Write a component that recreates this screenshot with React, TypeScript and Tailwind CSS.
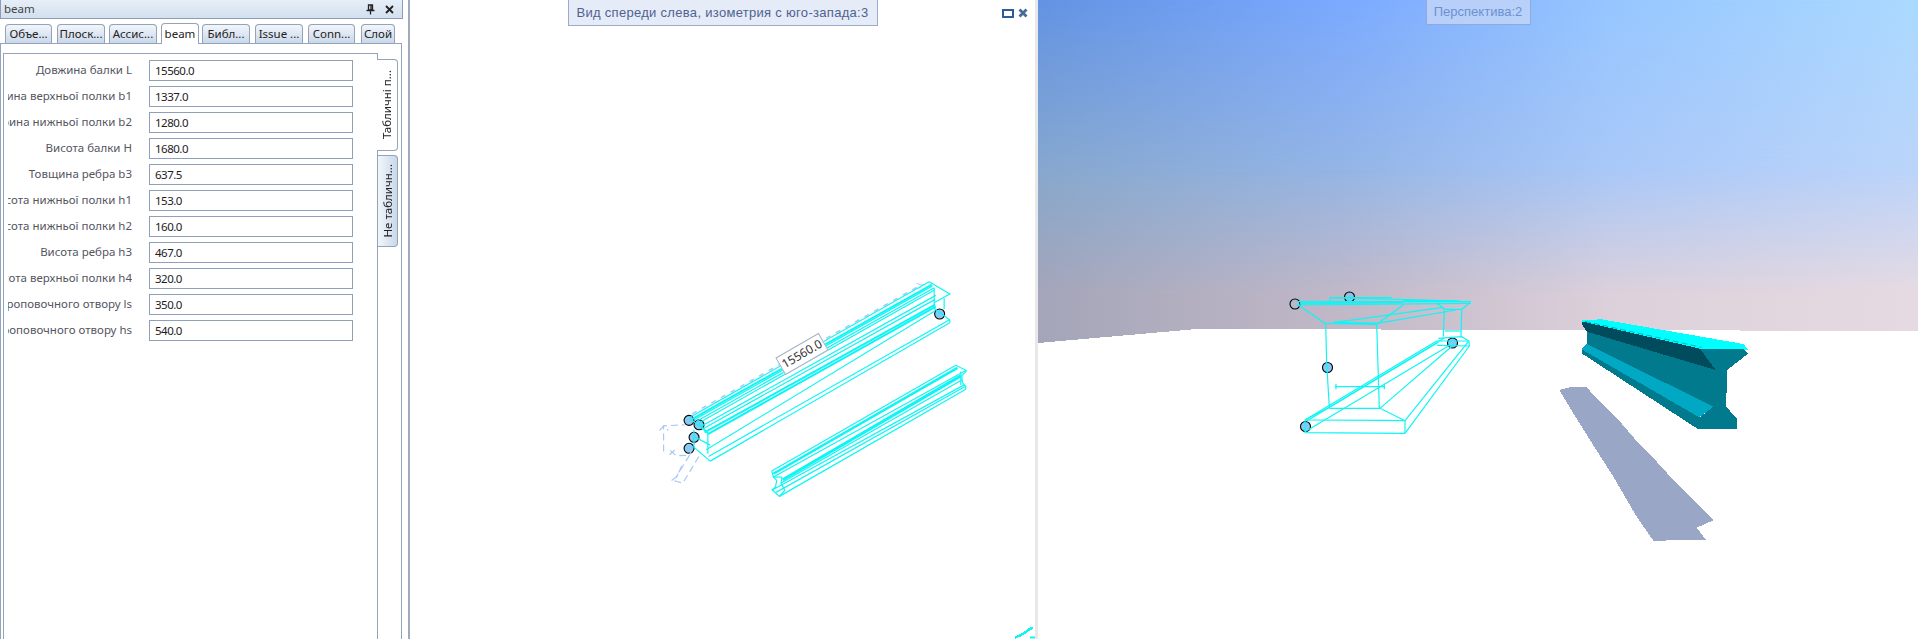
import React from "react";

const uiFont = "font-['Noto_Sans','Liberation_Sans',sans-serif]";

const tabs = [
  { t: "Объе...", c: "ml-[5px] w-[47px]" },
  { t: "Плоск...", c: "ml-[5px] w-[48px]" },
  { t: "Ассис...", c: "ml-[4px] w-[48px]" },
  { t: "beam", c: "ml-[4px] w-[38px]", active: true },
  { t: "Библ...", c: "ml-[3px] w-[48px]" },
  { t: "Issue ...", c: "ml-[5px] w-[48px]" },
  { t: "Conn...", c: "ml-[5px] w-[47px]" },
  { t: "Слой", c: "ml-[6px] w-[34px]" },
];

const rows = [
  ["Довжина балки L", "15560.0"],
  ["Ширина верхньої полки b1", "1337.0"],
  ["Ширина нижньої полки b2", "1280.0"],
  ["Висота балки H", "1680.0"],
  ["Товщина ребра b3", "637.5"],
  ["Висота нижньої полки h1", "153.0"],
  ["Висота нижньої полки h2", "160.0"],
  ["Висота ребра h3", "467.0"],
  ["Висота верхньої полки h4", "320.0"],
  ["Довжина строповочного отвору ls", "350.0"],
  ["Висота строповочного отвору hs", "540.0"],
];

const CY = "#0ff5f5";

function pts(o: [number, number], a: number[]) {
  const out: string[] = [];
  for (let i = 0; i < a.length; i += 2) out.push(`${o[0] + a[i] / 3},${o[1] + a[i + 1] / 3}`);
  return out.join(" ");
}

function Wire({ o, lines, w = 1.2, color = CY, dash }: { o: [number, number]; lines: number[][]; w?: number; color?: string; dash?: string }) {
  return (
    <g fill="none" stroke={color} strokeWidth={w} strokeDasharray={dash}>
      {lines.map((l, i) => (
        <polyline key={i} points={pts(o, l)} />
      ))}
    </g>
  );
}

function Handle({ x, y, fill = "#86caf4" }: { x: number; y: number; fill?: string }) {
  return <circle cx={x} cy={y} r={5} fill={fill} stroke="#000" strokeWidth={1.1} />;
}

function Poly({ o, p, fill }: { o: [number, number]; p: number[]; fill: string }) {
  return <polygon points={pts(o, p)} fill={fill} shapeRendering="crispEdges" />;
}

function MiddleScene() {
  const o: [number, number] = [640, 270];
  return (
    <svg className="absolute inset-0 h-full w-full" viewBox="410 0 626 639">
      <Handle x={689.5} y={420.5} />
      <Handle x={699.5} y={425} />
      <Handle x={694.5} y={437.5} />
      <Handle x={689.5} y={448.5} />
      <Handle x={940.5} y={314} />
      <Wire o={o} color="#a9c9f4" w={1.5} dash="5 6" lines={[[158, 432, 850, 42]]} />
      <polyline points={pts(o, [832, 40, 850, 46, 838, 56])} fill="none" stroke="#a9c9f4" />
      <Wire
        o={o}
        color="#a9c9f4"
        dash="7 4"
        lines={[
          [72, 545, 72, 468, 135, 465],
          [60, 482, 72, 468, 86, 482],
          [92, 542, 110, 558, 150, 556, 165, 520],
          [90, 555, 108, 538],
          [178, 560, 130, 640, 100, 632],
          [150, 556, 108, 625],
          [96, 632, 112, 620, 126, 590, 135, 582],
        ]}
      />
      <Wire
        o={o}
        lines={[
          [155, 440, 870, 35],
          [164, 450, 880, 48],
          [170, 455, 884, 54],
          [176, 460, 886, 60],
          [184, 470, 890, 76],
          [188, 478, 888, 88],
          [200, 540, 888, 122],
          [207, 560, 930, 150],
          [212, 574, 932, 158],
          [870, 35, 932, 72, 885, 98],
          [885, 52, 885, 115, 932, 150, 932, 158],
          [915, 85, 915, 118],
          [150, 445, 205, 490, 205, 552],
          [163, 480, 163, 532, 212, 574],
          [163, 500, 212, 526],
          [180, 462, 205, 490],
        ]}
      />
      <Wire o={o} w={2} lines={[[195, 488, 888, 104], [205, 493, 890, 110], [160, 446, 878, 44]]} />
      <Wire
        o={o}
        lines={[
          [397, 604, 950, 286],
          [402, 622, 980, 302],
          [425, 640, 968, 330],
          [400, 660, 975, 345],
          [420, 680, 980, 358],
          [410, 668, 978, 350],
          [950, 286, 982, 302, 968, 318, 970, 338, 980, 350, 980, 358],
          [965, 305, 965, 345],
          [397, 604, 402, 622, 412, 632, 408, 652, 398, 660, 420, 680, 436, 662, 425, 640, 428, 622],
          [402, 622, 428, 622],
        ]}
      />
      <Wire o={o} w={2.5} lines={[[402, 612, 955, 294]]} />
      <Wire o={o} w={3} lines={[[430, 630, 965, 318]]} />
      <polyline points="1016,638 1021,636 1026,633 1030,630 1034,628" fill="none" stroke="#0ff5f5" strokeWidth={2.5} shapeRendering="crispEdges" />
      <line x1="1031" y1="638" x2="1036" y2="638" stroke="#0ff5f5" strokeWidth={2} />
    </svg>
  );
}

function RightScene() {
  const w: [number, number] = [1270, 270];
  const s: [number, number] = [1540, 300];
  return (
    <svg className="absolute inset-0 h-full w-full" viewBox="1038 0 880 639">
      <polygon points="1038,343 1197,329 1918,331 1918,639 1038,639" fill="#ffffff" shapeRendering="crispEdges" />
      <Poly
        o={s}
        fill="#9aa6c6"
        p={[58, 270, 90, 262, 140, 262, 170, 295, 240, 365, 300, 435, 350, 485, 400, 540, 465, 605, 522, 660, 470, 683, 498, 720, 340, 722, 290, 650, 220, 530, 150, 420, 100, 340]}
      />
      <Poly o={s} fill="#007a8c" p={[140, 90, 480, 140, 527, 208, 520, 320, 478, 352, 140, 132]} />
      <Poly o={s} fill="#007a8c" p={[125, 148, 478, 352, 475, 388, 125, 160]} />
      <Poly o={s} fill="#00a8c4" p={[140, 132, 520, 320, 478, 352, 125, 148]} />
      <Poly o={s} fill="#004c5c" p={[125, 62, 480, 146, 527, 210, 140, 95, 125, 72]} />
      <Poly o={s} fill="#00ffff" p={[125, 60, 185, 58, 610, 132, 625, 150, 610, 150, 480, 146, 125, 64]} />
      <Poly o={s} fill="#007a8c" p={[480, 146, 610, 146, 625, 160, 568, 205, 562, 212, 558, 320, 590, 355, 590, 388, 475, 388, 475, 355, 520, 320, 527, 208]} />
      <polyline points={pts(s, [135, 64, 485, 142])} fill="none" stroke="#00b8c8" strokeWidth={1} strokeDasharray="6 3" />
      <Handle x={1295} y={304} fill="#b4bace" />
      <Handle x={1349.5} y={297} fill="#8fc0e6" />
      <Handle x={1327.5} y={367.5} />
      <Handle x={1452.5} y={343} />
      <Handle x={1305.5} y={426.5} />
      <Wire
        o={w}
        lines={[
          [80, 95, 602, 95],
          [80, 105, 602, 100],
          [180, 83, 570, 93],
          [180, 83, 180, 95],
          [180, 83, 365, 83],
          [85, 105, 165, 160, 320, 163, 400, 105],
          [190, 158, 520, 112],
          [320, 160, 558, 120],
          [602, 97, 575, 118, 525, 118, 500, 100],
          [167, 160, 170, 280, 178, 412],
          [320, 163, 328, 415],
          [523, 118, 520, 200],
          [575, 118, 573, 200],
          [525, 183, 572, 183],
          [505, 205, 575, 200, 597, 213, 598, 228],
          [178, 415, 330, 415],
          [178, 412, 105, 450],
          [330, 415, 405, 452],
          [105, 450, 345, 451, 405, 452, 405, 490],
          [105, 450, 105, 488, 405, 490],
          [105, 450, 500, 213],
          [110, 453, 505, 217],
          [180, 410, 522, 205],
          [330, 415, 550, 225],
          [405, 452, 595, 215],
          [405, 490, 598, 228],
          [105, 485, 540, 225],
          [500, 213, 597, 213],
          [500, 226, 598, 228],
          [195, 350, 345, 350],
          [198, 341, 198, 358],
          [343, 341, 343, 358],
        ]}
      />
      <Wire o={w} w={1.6} lines={[[190, 158, 320, 160], [90, 100, 400, 97], [400, 92, 560, 93]]} />
    </svg>
  );
}

export default function App() {
  return (
    <div className={`flex h-[639px] w-[1918px] overflow-hidden bg-white ${uiFont}`}>
      <aside className="flex h-full w-[408px] shrink-0 flex-col bg-white">
        <div className="mr-[5px] flex h-[19px] items-center justify-between border border-t-0 border-[#8d9db5] bg-[linear-gradient(to_bottom,#e6eef8,#d3e0ef)] pl-[3px] pr-[8px] text-[11.5px] text-[#444]">
          <span>beam</span>
          <span className="flex items-center gap-[10px]">
            <svg width="9" height="11" viewBox="0 0 9 11">
              <path d="M2.5 1h4v5h-4zM5 1v5M0.5 6.5h8M4.5 6.5v4" fill="none" stroke="#222" strokeWidth="1.3" />
            </svg>
            <svg width="9" height="9" viewBox="0 0 9 9">
              <path d="M1 1l7 7M8 1l-7 7" stroke="#222" strokeWidth="1.8" />
            </svg>
          </span>
        </div>
        <div className="mr-[6px] flex h-[24px] items-end">
          {tabs.map((x) =>
            x.active ? (
              <div key={x.t} className={`${x.c} relative z-10 -mb-px flex h-[21px] items-start justify-center rounded-t-[4px] border border-b-0 border-[#93a3ba] bg-white pt-[1px] text-[11.5px] text-[#222]`}>
                {x.t}
              </div>
            ) : (
              <div key={x.t} className={`${x.c} flex h-[19px] items-center justify-center rounded-t-[4px] border border-b-0 border-[#93a3ba] bg-[linear-gradient(to_bottom,#f2f6fb,#c9d8ea)] text-[11.5px] text-[#222]`}>
                {x.t}
              </div>
            )
          )}
        </div>
        <div className="mr-[6px] flex min-h-0 flex-1 border-x border-t border-[#93a3ba] pl-[2px] pt-[9px]">
          <div className="w-[375px] shrink-0 border-l border-r border-t border-[#93a3ba] pt-[6px]">
            <div className="flex flex-col gap-[5px]">
              {rows.map(([l, v]) => (
                <div key={l} className="flex h-[21px] items-center">
                  <div className="ml-[4px] flex w-[124px] justify-end overflow-hidden whitespace-nowrap pb-[1px] text-[11.5px] text-[#55555f]">
                    <span className="shrink-0">{l}</span>
                  </div>
                  <div className="ml-[17px] flex h-[21px] w-[204px] items-center border border-[#8fa0b8] bg-white pl-[5px] text-[11.5px] tracking-[-0.5px] text-[#1c1c1c]">
                    {v}
                  </div>
                </div>
              ))}
            </div>
          </div>
          <div className="flex flex-col pt-[6px]">
            <div className="relative -ml-px flex h-[92px] w-[21px] items-center justify-center rounded-r-[4px] border border-l-0 border-[#93a3ba] bg-white text-[11.5px] text-[#222]">
              <span className="rotate-180 whitespace-nowrap [writing-mode:vertical-rl]">Табличні п...</span>
            </div>
            <div className="mt-[4px] flex h-[92px] w-[20px] items-center justify-center rounded-r-[4px] border border-l-0 border-[#93a3ba] bg-[linear-gradient(to_right,#f2f6fb,#c9d8ea)] text-[11.5px] text-[#222]">
              <span className="rotate-180 whitespace-nowrap [writing-mode:vertical-rl]">Не табличн...</span>
            </div>
          </div>
        </div>
      </aside>

      <main className="relative flex h-full w-[630px] shrink-0 justify-center border-l-2 border-r-[3px] border-l-[#a0a9bd] border-r-[#e8e8e8] bg-white">
        <MiddleScene />
        <div className="relative flex h-[26px] w-[310px] items-center justify-center whitespace-nowrap border border-t-0 border-[#9babc9] bg-[#e6ebf8] font-['Liberation_Sans',sans-serif] text-[13px] tracking-[0.3px] text-[#4d6390]">
          Вид спереди слева, изометрия с юго-запада:3
        </div>
        <div className="absolute left-[592px] top-[8px] flex items-center gap-[4px]">
          <span className="h-[9px] w-[12px] border-2 border-[#2f5c96]" />
          <svg width="10" height="10" viewBox="0 0 10 10">
            <path d="M1.5 1.5l7 7M8.5 1.5l-7 7" stroke="#4a6a96" strokeWidth="2.8" />
          </svg>
        </div>
        <div className="absolute left-[367px] top-[344px] flex h-[20px] w-[50px] -rotate-[30deg] items-center justify-center border border-[#a5b2c8] bg-white text-[12px] text-[#333]">
          15560.0
        </div>
      </main>

      <section className="relative flex h-full flex-1 justify-center overflow-hidden">
        <div className="absolute inset-0 bg-[linear-gradient(90deg,#6393e3_0%,#7aa9ff_34%,#96c6ff_65%,#abdaff_100%)]" />
        <div className="absolute inset-0 bg-[linear-gradient(90deg,#88a8cc_0%,#95b5e4_34%,#aac8f8_65%,#bcd4fa_100%)] [mask-image:linear-gradient(to_bottom,transparent_0px,black_180px)]" />
        <div className="absolute inset-0 bg-[linear-gradient(90deg,#a4a5b9_0%,#c2b9c8_36%,#dcd0da_65%,#e6dae2_100%)] [mask-image:linear-gradient(to_bottom,transparent_170px,black_295px)]" />
        <RightScene />
        <div className="relative flex h-[25px] w-[105px] items-center justify-center whitespace-nowrap border border-t-0 border-[#8fa9dc] bg-[#c4d6f8]/80 font-['Liberation_Sans',sans-serif] text-[13px] text-[#6c90d2]">
          Перспектива:2
        </div>
      </section>
    </div>
  );
}
